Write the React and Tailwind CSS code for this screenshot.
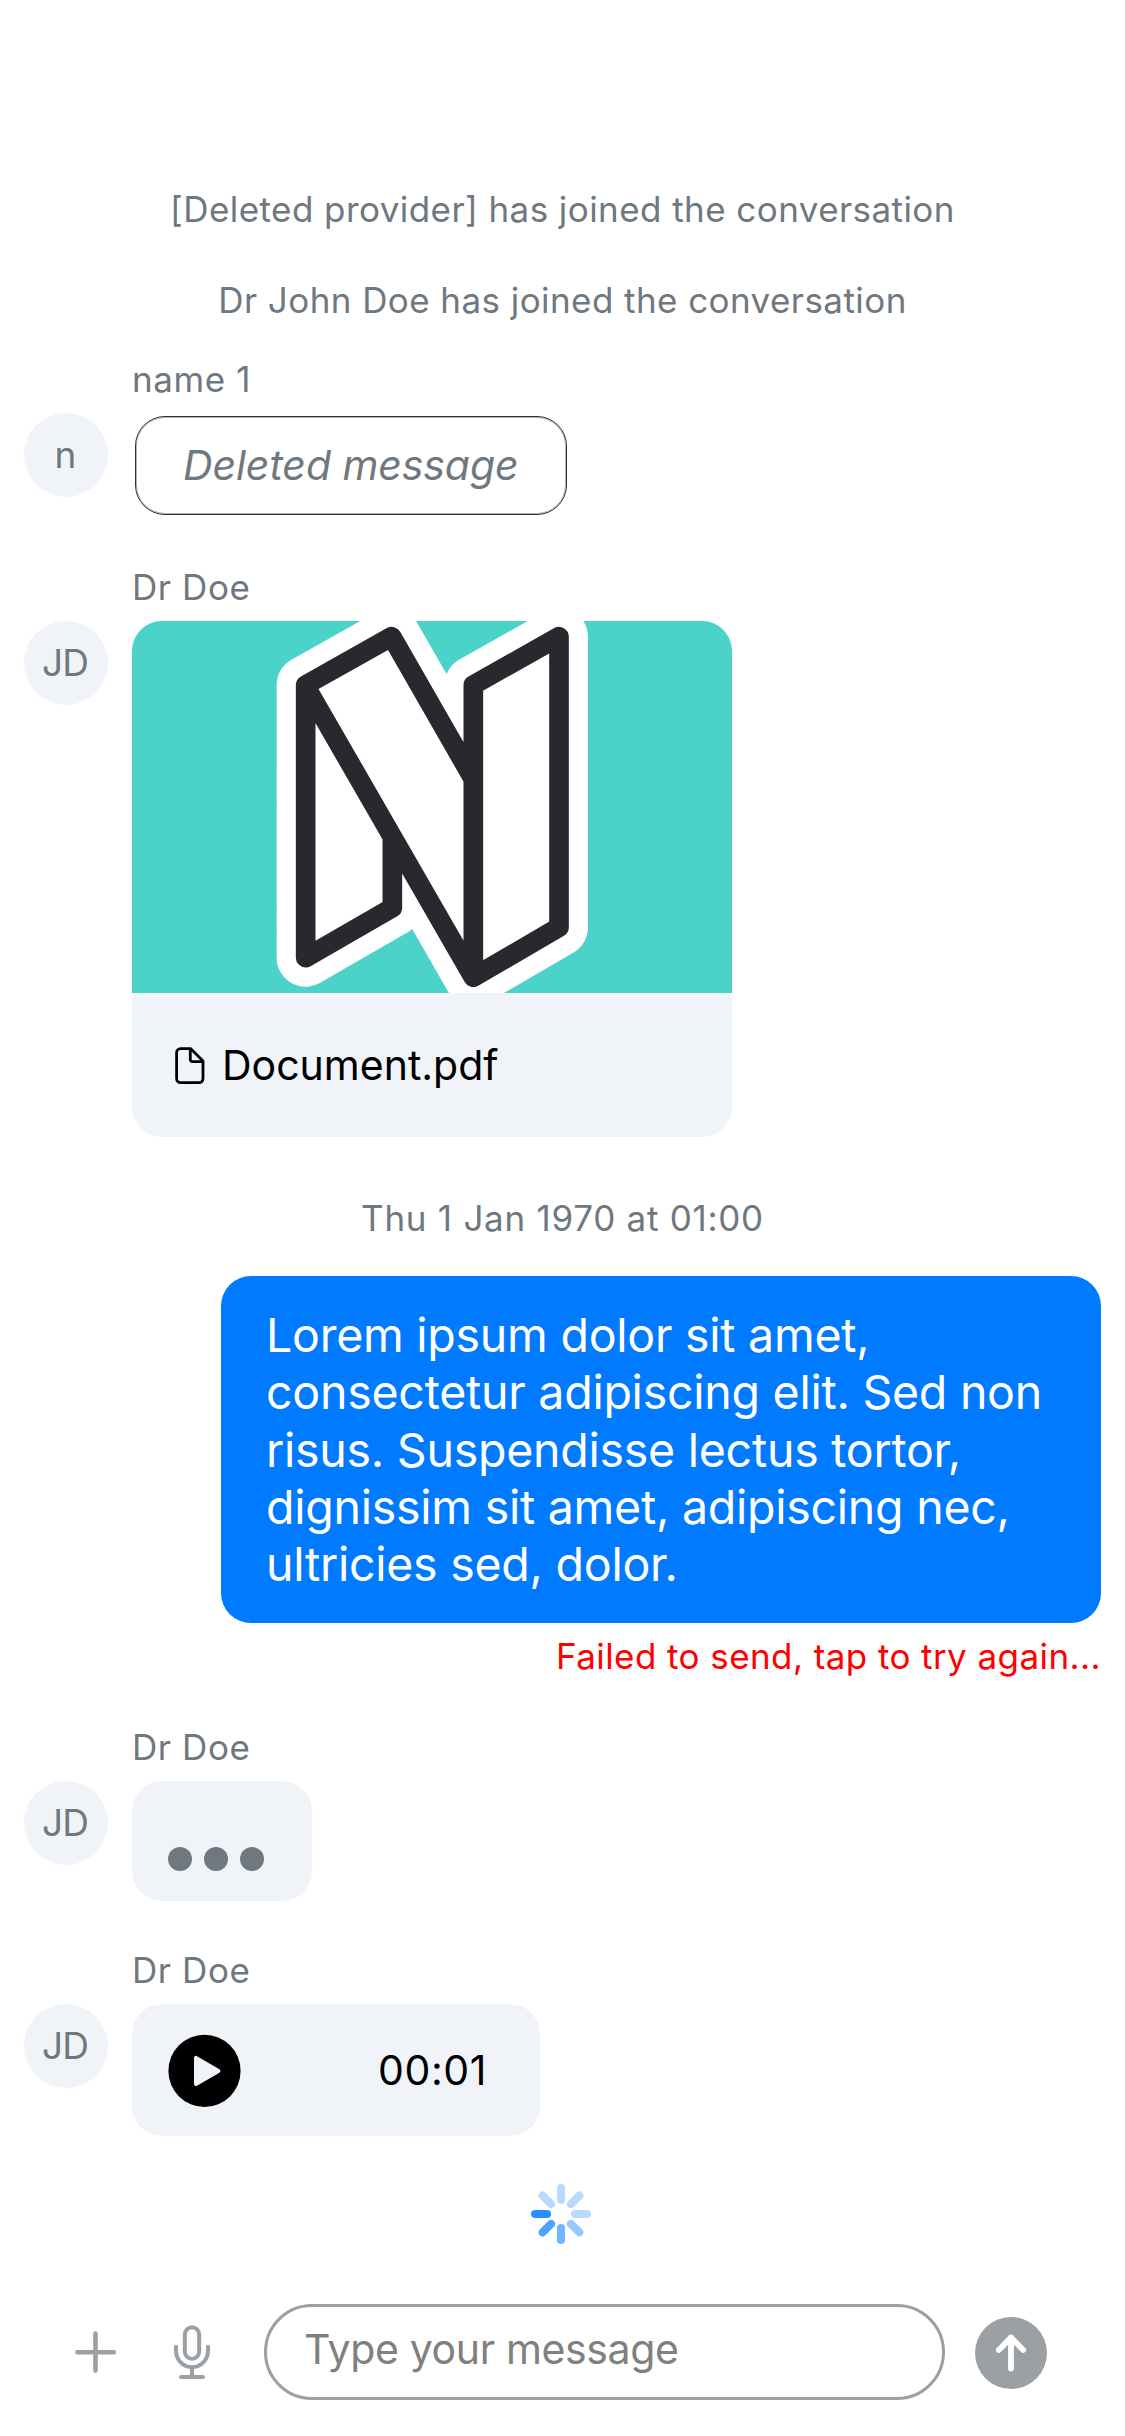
import React from 'react';

function Avatar({ initials }) {
  return (
    <div className="flex size-21 shrink-0 items-center justify-center rounded-full bg-[#f0f4f9] pr-0.5 pb-0.5 text-[37px] leading-none tracking-[-0.8px] text-[#6f787f]">
      {initials}
    </div>
  );
}

function Incoming({ name, initials, children }) {
  return (
    <section className="px-6">
      <p className="mb-3 ml-27 text-[35px] leading-11 tracking-[0.6px] text-[#6f787f]">{name}</p>
      <div className="flex items-start gap-6">
        <Avatar initials={initials} />
        {children}
      </div>
    </section>
  );
}

function SystemMessage({ children }) {
  return <p className="text-center text-[35px] leading-11 tracking-[0.43px] text-[#6f787f]">{children}</p>;
}

const MONOGRAM =
  'M137 225 395 80 640 507M137 225V1043L397 893V682M137 229 640 1102M640 225 897 80V952L640 1102Z';
const SILHOUETTE =
  'M137 225 395 80 640 507V225L897 80V952L640 1102 397 678V893L137 1043Z';

function Cover() {
  return (
    <svg className="block h-[372px] w-[600px] bg-[#4cd3c9]" viewBox="-384 33 1800 1116" aria-label="Document preview">
      <path d={SILHOUETTE} fill="#fff" stroke="#fff" strokeWidth="174" strokeLinejoin="round" />
      <path d={MONOGRAM} fill="none" stroke="#28292f" strokeWidth="59" strokeLinejoin="round" strokeLinecap="round" />
    </svg>
  );
}

function DocumentIcon() {
  return (
    <svg className="h-[37px] w-[30px]" viewBox="0 0 30 37" fill="none" stroke="#000" strokeWidth="2.8" strokeLinejoin="round">
      <path d="M5 1.6h10.5L28 14v17.6a4 4 0 0 1-4 4H5.6a4 4 0 0 1-4-4V5.6a4 4 0 0 1 4-4" />
      <path d="M15.3 2v10.6a2 2 0 0 0 2 2H28" />
    </svg>
  );
}

function PlayIcon() {
  return (
    <svg className="size-[73px]" viewBox="0 0 73 73">
      <circle cx="36.5" cy="36.9" r="36.1" />
      <path d="M28 23.9v26.2L50.4 37Z" fill="#f0f4f9" stroke="#f0f4f9" strokeWidth="4" strokeLinejoin="round" />
    </svg>
  );
}

function Spinner() {
  return (
    <svg className="size-[60px]" viewBox="-30 -30 60 60" strokeWidth="8" strokeLinecap="round">
      <path d="M0-14V-26M9.9-9.9 18.4-18.4M14 0H26M-9.9-9.9-18.4-18.4" stroke="#b8daff" />
      <path d="M9.9 9.9 18.4 18.4" stroke="#94c8ff" />
      <path d="M0 14V26" stroke="#70b5ff" />
      <path d="M-9.9 9.9-18.4 18.4" stroke="#4da3ff" />
      <path d="M-14 0H-26" stroke="#2690ff" />
    </svg>
  );
}

function PlusIcon() {
  return (
    <svg className="size-[42px]" viewBox="0 0 42 42" stroke="#9ba0a4" strokeWidth="4.6" strokeLinecap="round">
      <path d="M20.5 2.6V39.6M2.4 21.2H38.8" />
    </svg>
  );
}

function MicIcon() {
  return (
    <svg className="h-[54px] w-9" viewBox="0 0 36 54" fill="none" stroke="#9ba0a4" strokeWidth="4" strokeLinecap="round">
      <rect x="10.8" y="2.2" width="14.4" height="31.6" rx="7.2" />
      <path d="M2 21.8v3.9a16 16.4 0 0 0 32 0v-3.9M18 42.4V52M7 52H29" />
    </svg>
  );
}

function SendIcon() {
  return (
    <svg className="size-[38px]" viewBox="0 0 38 38" fill="none" stroke="#fff" strokeWidth="5.8" strokeLinecap="round" strokeLinejoin="round">
      <path d="M19 34.5V3.5M6.8 16 19 3.6 31.2 16" />
    </svg>
  );
}

export default function App() {
  return (
    <main className="flex h-[2436px] w-[1125px] flex-col bg-white pt-[187px] font-['Inter',sans-serif]">
      <div className="mb-[35px] flex flex-col gap-[47px]">
        <SystemMessage>[Deleted provider] has joined the conversation</SystemMessage>
        <SystemMessage>Dr John Doe has joined the conversation</SystemMessage>
      </div>

      <div className="flex flex-col gap-[47px]">
        <Incoming name="name 1" initials="n">
          <div className="mx-[3px] my-[3px] flex h-[99px] w-[432px] items-center rounded-[30px] border border-[#2c3034] pl-[47px] text-[41px] leading-none tracking-[-0.08px] italic text-[#6f787f] inset-shadow-[0_0_0_1px_#b4b7ba]">
            Deleted message
          </div>
        </Incoming>

        <Incoming name="Dr Doe" initials="JD">
          <article className="overflow-hidden rounded-[30px] bg-[#f0f4f9]">
            <Cover />
            <div className="flex h-36 items-center gap-[17px] pl-[43px] text-[41px] leading-none">
              <DocumentIcon />
              Document.pdf
            </div>
          </article>
        </Incoming>
      </div>

      <p className="mt-[59px] text-center text-[35px] leading-11 tracking-[0.73px] text-[#6f787f]">
        Thu 1 Jan 1970 at 01:00
      </p>

      <section className="mt-9 mb-[47px] flex flex-col items-end px-6">
        <p className="h-[347px] w-[880px] rounded-[30px] bg-[#007aff] px-[45px] pt-[31px] text-[46.5px] leading-[57.3px] tracking-[-0.25px] text-white">
          Lorem ipsum dolor sit amet, consectetur adipiscing elit. Sed non risus. Suspendisse lectus tortor,
          dignissim sit amet, adipiscing nec, ultricies sed, dolor.
        </p>
        <p className="mt-[11px] text-[35px] leading-11 tracking-[0.42px] text-[#ff0000]">
          Failed to send, tap to try again...
        </p>
      </section>

      <div className="flex flex-col gap-[47px]">
        <Incoming name="Dr Doe" initials="JD">
          <div className="flex h-30 w-45 items-end gap-3 rounded-[30px] bg-[#f0f4f9] px-9 pb-[30px]">
            <span className="size-6 rounded-full bg-[#6f787f]" />
            <span className="size-6 rounded-full bg-[#6f787f]" />
            <span className="size-6 rounded-full bg-[#6f787f]" />
          </div>
        </Incoming>

        <Incoming name="Dr Doe" initials="JD">
          <div className="flex h-[132px] w-102 items-center justify-between rounded-[30px] bg-[#f0f4f9] pr-[53px] pl-9 text-[41px] leading-none tracking-[0.57px]">
            <PlayIcon />
            <span>00:01</span>
          </div>
        </Incoming>
      </div>

      <div className="mt-12 flex justify-center pr-[3px]">
        <Spinner />
      </div>

      <footer className="mt-[60px] flex items-center pl-[75px]">
        <PlusIcon />
        <span className="ml-[57px]">
          <MicIcon />
        </span>
        <div className="ml-[54px] flex h-24 w-[681px] items-center rounded-full border-3 border-[#9ba0a4] pb-[5px] pl-[37px] text-[41px] leading-none tracking-[-0.36px] text-[#808080]">
          Type your message
        </div>
        <button className="mt-0.5 ml-[30px] flex size-18 items-center justify-center rounded-full bg-[#9ba0a4]">
          <SendIcon />
        </button>
      </footer>
    </main>
  );
}
